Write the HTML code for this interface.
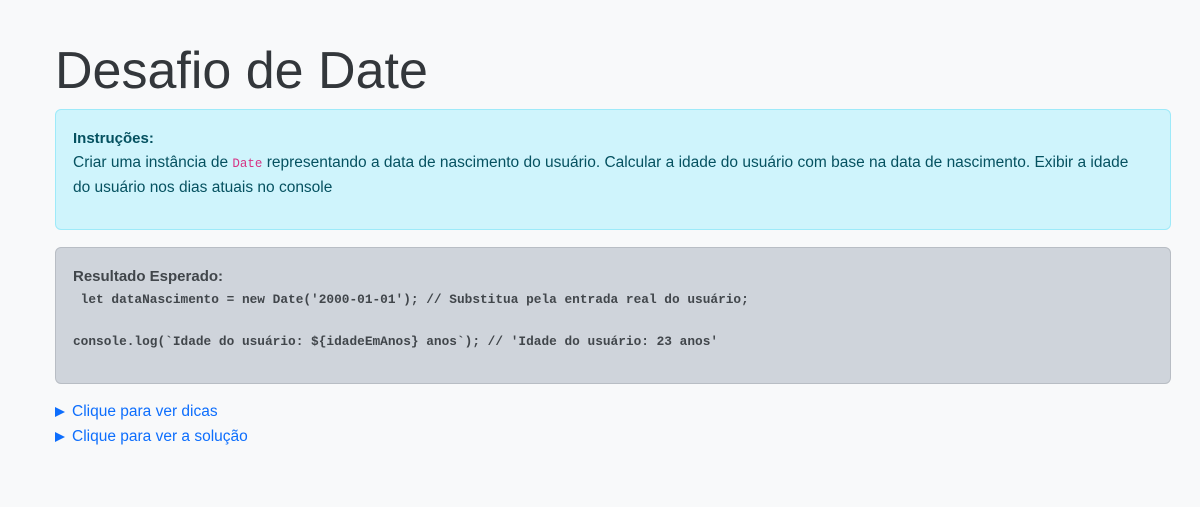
<!DOCTYPE html>
<html><head><meta charset="utf-8"><style>
body{margin:0;background:#f8f9fa;font-family:"Liberation Sans",sans-serif;color:#212529;width:1200px;height:507px;overflow:hidden}
.c{position:absolute;left:55px;width:1116px}
h1{position:absolute;left:55px;top:39px;margin:0;font-weight:normal;font-size:52px;line-height:64px;color:#33373b;letter-spacing:0}
.a{top:109px;height:121px;box-sizing:border-box;background:#cff4fc;border:1px solid #9eeaf9;border-radius:6px;padding:20px 17px;color:#055160;font-size:15.5px;line-height:24px}
.a b{display:block;font-size:15px;line-height:18px;margin-bottom:3px}
code{font-family:"Liberation Mono",monospace;color:#d63384;font-size:12.5px}
.g{top:247px;height:137px;box-sizing:border-box;background:#cfd4db;border:1px solid #b8bdc4;border-radius:6px;padding:20px 17px;color:#41464b}
.g b{display:block;font-size:15px;line-height:18px}
pre{margin:3px 0 0;font-family:"Liberation Mono",monospace;font-weight:bold;font-size:12.8px;line-height:21px;color:#41464b}
.l{position:absolute;left:55px;color:#0d6efd;font-size:15.5px;line-height:20px}
.l span{display:inline-block;width:0;height:0;border-left:10px solid #0d6efd;border-top:5.5px solid transparent;border-bottom:5.5px solid transparent;margin-right:7px;vertical-align:-1px}
</style></head><body>
<h1>Desafio de Date</h1>
<div class="c a"><b>Instruções:</b>Criar uma instância de <code>Date</code> representando a data de nascimento do usuário. Calcular a idade do usuário com base na data de nascimento. Exibir a idade<br>do usuário nos dias atuais no console</div>
<div class="c g"><b>Resultado Esperado:</b><pre> let dataNascimento = new Date('2000-01-01'); // Substitua pela entrada real do usuário;

console.log(`Idade do usuário: ${idadeEmAnos} anos`); // 'Idade do usuário: 23 anos'</pre></div>
<div class="l" style="top:402px"><span></span>Clique para ver dicas</div>
<div class="l" style="top:427px"><span></span>Clique para ver a solução</div>
</body></html>
